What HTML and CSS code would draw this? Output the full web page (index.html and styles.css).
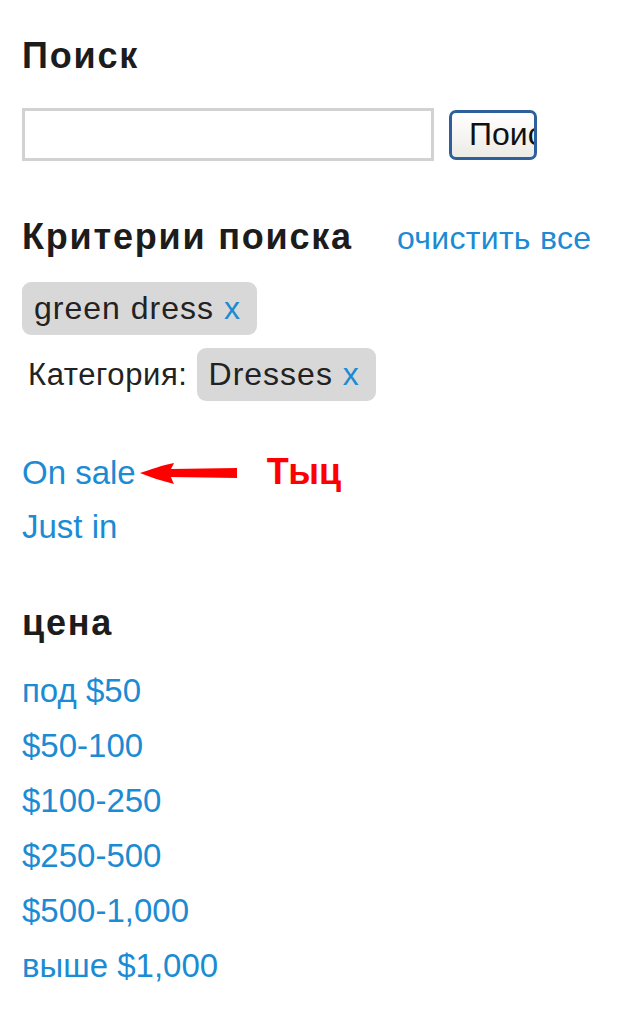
FILE: index.html
```html
<!DOCTYPE html>
<html lang="ru">
<head>
<meta charset="UTF-8">
<meta name="viewport" content="width=device-width, initial-scale=1.0">
<title>Поиск</title>
<link rel="stylesheet" href="styles.css">
</head>
<body>

<div class="sidebar">
  <h2 class="block-title">Поиск</h2>
  <form class="search-row" onsubmit="return false">
    <input type="text" class="search-input">
    <button class="search-btn">Поиск</button>
  </form>

  <div class="criteria-head">
    <h2 class="block-title">Критерии поиска</h2>
    <a href="#" class="clear-all">очистить все</a>
  </div>

  <div class="chip-row first">
    <span class="chip">green dress <a href="#">x</a></span>
  </div>
  <div class="chip-row">
    <span class="chip-label">Категория:</span>
    <span class="chip">Dresses <a href="#">x</a></span>
  </div>

  <ul class="link-list flags">
    <li>
      <a href="#">On sale</a><svg class="arrow" width="98" height="24" viewBox="0 0 98 24">
        <path d="M0 11 C10 8 22 3 34 1 C32 5 31 7 31 7 L97 6 L97 16 L31 15 C31 15 32 18 34 22 C22 19 10 15 0 11 Z" fill="#f00"/>
      </svg><span class="note">Тыц</span>
    </li>
    <li><a href="#">Just in</a></li>
  </ul>

  <h2 class="block-title price-title">цена</h2>
  <ul class="link-list prices">
    <li><a href="#">под $50</a></li>
    <li><a href="#">$50-100</a></li>
    <li><a href="#">$100-250</a></li>
    <li><a href="#">$250-500</a></li>
    <li><a href="#">$500-1,000</a></li>
    <li><a href="#">выше $1,000</a></li>
  </ul>
</div>

</body>
</html>
```

FILE: styles.css
```css
body {
  margin: 0;
  background: #fff;
  font-family: "Liberation Sans", Arial, sans-serif;
  color: #222;
}

.sidebar {
  padding: 36px 22px;
}

.block-title {
  margin: 0;
  font-size: 36px;
  line-height: 40px;
  font-weight: bold;
  letter-spacing: 1.8px;
  color: #1c1c1c;
}

a {
  color: #1b8bd3;
  text-decoration: none;
}

/* search box */
.search-row {
  display: flex;
  align-items: center;
  margin: 32px 0 0;
}
.search-input {
  box-sizing: border-box;
  width: 412px;
  height: 53px;
  border: 3px solid #d2d2d2;
  background: #fff;
  margin: 0;
}
.search-btn {
  box-sizing: border-box;
  width: 88px;
  height: 50px;
  margin-left: 15px;
  padding: 0 0 0 17px;
  border: 3px solid #2d5f9c;
  border-radius: 7px;
  background: linear-gradient(#ffffff, #ecebe6);
  font-family: "Liberation Sans", Arial, sans-serif;
  font-size: 32px;
  color: #111;
  text-align: left;
  overflow: hidden;
  white-space: nowrap;
}

/* criteria */
.criteria-head {
  display: flex;
  align-items: baseline;
  margin-top: 56px;
}
.clear-all {
  margin-left: 44px;
  font-size: 32px;
  letter-spacing: 0.3px;
}

.chip-row {
  display: flex;
  align-items: center;
  margin-top: 13px;
}
.chip-row.first {
  margin-top: 25px;
}
.chip-label {
  font-size: 31px;
  letter-spacing: 0.6px;
  padding-left: 6px;
  margin-right: 9px;
}
.chip {
  display: inline-block;
  height: 53px;
  line-height: 53px;
  padding: 0 16px 0 12px;
  background: #d8d8d8;
  border-radius: 9px;
  font-size: 32px;
  letter-spacing: 1px;
  color: #222;
}

/* link lists */
.link-list {
  list-style: none;
  margin: 0;
  padding: 0;
  font-size: 33px;
}
.link-list li {
  height: 55px;
  line-height: 55px;
}
.flags {
  margin-top: 43px;
}
.arrow {
  vertical-align: -2px;
  margin-left: 4px;
}
.note {
  margin-left: 29px;
  color: #f00;
  font-weight: bold;
  font-size: 36px;
}

.price-title {
  margin-top: 49px;
}
.prices {
  margin-top: 20px;
}
```
